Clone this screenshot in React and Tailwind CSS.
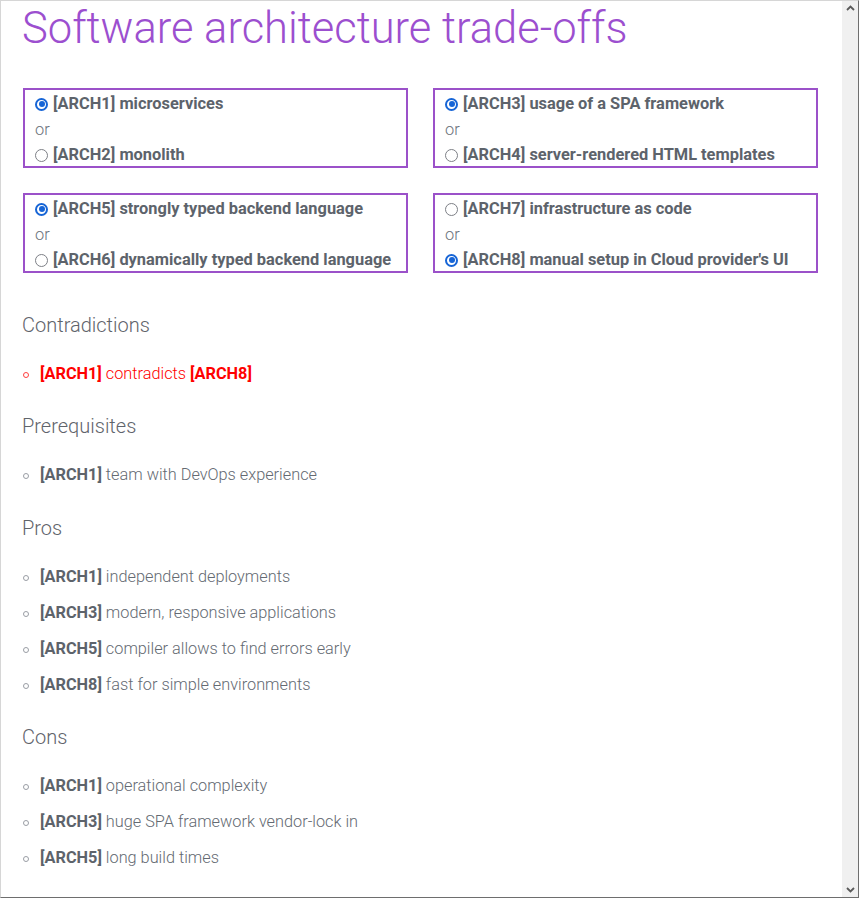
import React from "react";

const choices = [
  [
    { id: "ARCH1", text: "microservices", on: true },
    { id: "ARCH2", text: "monolith", on: false },
  ],
  [
    { id: "ARCH3", text: "usage of a SPA framework", on: true },
    { id: "ARCH4", text: "server-rendered HTML templates", on: false },
  ],
  [
    { id: "ARCH5", text: "strongly typed backend language", on: true },
    { id: "ARCH6", text: "dynamically typed backend language", on: false },
  ],
  [
    { id: "ARCH7", text: "infrastructure as code", on: false },
    { id: "ARCH8", text: "manual setup in Cloud provider's UI", on: true },
  ],
];

const sections = [
  { title: "Prerequisites", mt: "mt-[19px]", items: [["ARCH1", "team with DevOps experience"]] },
  {
    title: "Pros",
    mt: "mt-[20px]",
    items: [
      ["ARCH1", "independent deployments"],
      ["ARCH3", "modern, responsive applications"],
      ["ARCH5", "compiler allows to find errors early"],
      ["ARCH8", "fast for simple environments"],
    ],
  },
  {
    title: "Cons",
    mt: "mt-[19px]",
    items: [
      ["ARCH1", "operational complexity"],
      ["ARCH3", "huge SPA framework vendor-lock in"],
      ["ARCH5", "long build times"],
    ],
  },
];

function Radio({ on }) {
  if (on) {
    return (
      <span className="w-[13px] h-[13px] rounded-full border-2 border-[#1765d6] flex items-center justify-center shrink-0">
        <span className="w-[6px] h-[6px] rounded-full bg-[#1765d6]" />
      </span>
    );
  }
  return <span className="w-[13px] h-[13px] rounded-full border border-[#7d7f86] shrink-0" />;
}

function ChoiceBox({ pair }) {
  return (
    <div className="border-2 border-[#9b51c9] h-[80px] px-[10px] pt-[4px] flex flex-col justify-center text-[16.4px] leading-[25.5px]">
      <label className="flex items-center gap-[5px] font-bold text-[#5d636b]">
        <Radio on={pair[0].on} />
        <span>[{pair[0].id}] {pair[0].text}</span>
      </label>
      <div className="text-[#6c737c] font-light">or</div>
      <label className="flex items-center gap-[5px] font-bold text-[#5d636b]">
        <Radio on={pair[1].on} />
        <span>[{pair[1].id}] {pair[1].text}</span>
      </label>
    </div>
  );
}

function Bullet({ red }) {
  return (
    <span
      className={`w-[6px] h-[6px] rounded-full border shrink-0 ${red ? "border-[#ff4040]" : "border-[#9a9ea5]"}`}
    />
  );
}

export default function App() {
  return (
    <div
      className="w-[859px] h-[898px] flex overflow-hidden bg-white border-t border-l border-t-[#d6d6d6] border-l-[#d6d6d6] border-r border-b border-r-[#6e6e6e] border-b-[#6e6e6e]"
      style={{ fontFamily: "Roboto, 'Noto Sans', sans-serif" }}
    >
      <div className="flex-1 pl-[21px] pr-[24px] overflow-hidden">
        <h1 className="text-[43.5px] leading-none font-light text-[#9c4fcf] mt-[6px]">
          Software architecture trade-offs
        </h1>

        <div className="grid grid-cols-2 gap-x-[25px] gap-y-[25px] mt-[37px] pl-[1px]">
          {choices.map((pair, i) => (
            <ChoiceBox key={i} pair={pair} />
          ))}
        </div>

        <h2 className="text-[20px] font-light text-[#5f646b] mt-[38px] leading-[28px]">Contradictions</h2>
        <ul className="mt-[18px]">
          <li className="flex items-center gap-[11px] pl-[1px] h-[36px] text-[16.3px] text-[#ff0000] font-light">
            <Bullet red />
            <span>
              <b className="font-bold">[ARCH1]</b> contradicts <b className="font-bold">[ARCH8]</b>
            </span>
          </li>
        </ul>

        {sections.map((s) => (
          <div key={s.title}>
            <h2 className={`text-[20px] font-light text-[#5f646b] leading-[28px] ${s.mt}`}>{s.title}</h2>
            <ul className="mt-[18px]">
              {s.items.map(([id, t]) => (
                <li
                  key={id + t}
                  className="flex items-center gap-[11px] pl-[1px] h-[36px] text-[16.3px] text-[#646a72] font-light"
                >
                  <Bullet />
                  <span>
                    <b className="font-bold text-[#5d636b]">[{id}]</b> {t}
                  </span>
                </li>
              ))}
            </ul>
          </div>
        ))}
      </div>

      <div className="w-[16px] bg-[#f0f0f0] flex flex-col justify-between items-center py-[4px]">
        <svg width="9" height="6" viewBox="0 0 9 6">
          <path d="M1 5 L4.5 1.5 L8 5" stroke="#5a5a5a" strokeWidth="1.8" fill="none" />
        </svg>
        <svg width="9" height="6" viewBox="0 0 9 6">
          <path d="M1 1 L4.5 4.5 L8 1" stroke="#5a5a5a" strokeWidth="1.8" fill="none" />
        </svg>
      </div>
    </div>
  );
}
